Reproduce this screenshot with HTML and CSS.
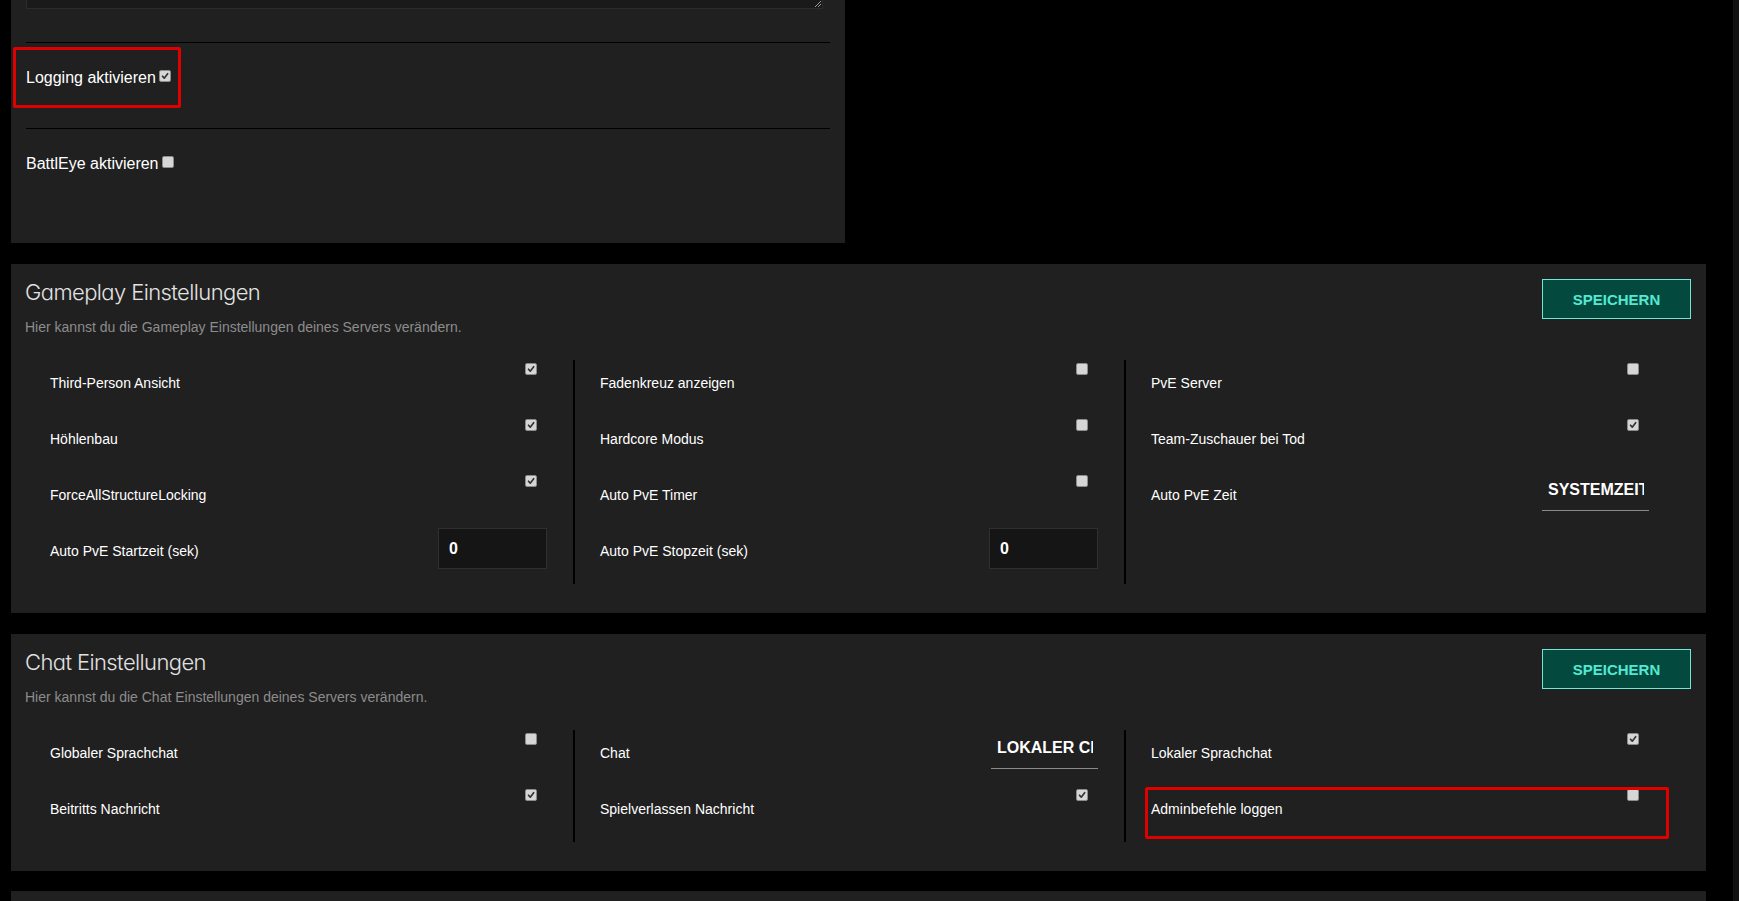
FILE: index.html
```html
<!DOCTYPE html>
<html lang="de">
<head>
<meta charset="utf-8">
<title>Server Einstellungen</title>
<link rel="stylesheet" href="styles.css">
</head>
<body>
<div class="page">
  <section class="panel panel-top">
    <div class="ta">
      <svg class="ta-grip" viewBox="0 0 7 7" width="7" height="7"><path d="M1 7 L7 1 M4 7 L7 4" stroke="#9a9a9a" stroke-width="1"/></svg>
    </div>
    <div class="tp-group">
      <div class="mark mark-log"></div>
      <div class="tp-label">Logging aktivieren<span class="cb on"><svg viewBox="0 0 12 12"><path d="M3 6.3 L5.1 8.6 L9.2 3.3"/></svg></span></div>
    </div>
    <div class="tp-group tp-last">
      <div class="tp-label">BattlEye aktivieren<span class="cb"></span></div>
    </div>
  </section>

  <section class="panel panel-sec">
    <div class="sec-head">
      <div>
        <h2 class="sec-title">Gameplay Einstellungen</h2>
        <p class="sec-sub">Hier kannst du die Gameplay Einstellungen deines Servers verändern.</p>
      </div>
      <button class="btn">SPEICHERN</button>
    </div>
    <div class="grid">
      <div class="col">
        <div class="row"><span class="lbl">Third-Person Ansicht</span><span class="cb on"><svg viewBox="0 0 12 12"><path d="M3 6.3 L5.1 8.6 L9.2 3.3"/></svg></span></div>
        <div class="row"><span class="lbl">Höhlenbau</span><span class="cb on"><svg viewBox="0 0 12 12"><path d="M3 6.3 L5.1 8.6 L9.2 3.3"/></svg></span></div>
        <div class="row"><span class="lbl">ForceAllStructureLocking</span><span class="cb on"><svg viewBox="0 0 12 12"><path d="M3 6.3 L5.1 8.6 L9.2 3.3"/></svg></span></div>
        <div class="row"><span class="lbl">Auto PvE Startzeit (sek)</span><input class="num" type="text" value="0"></div>
      </div>
      <div class="col col-div">
        <div class="row"><span class="lbl">Fadenkreuz anzeigen</span><span class="cb"></span></div>
        <div class="row"><span class="lbl">Hardcore Modus</span><span class="cb"></span></div>
        <div class="row"><span class="lbl">Auto PvE Timer</span><span class="cb"></span></div>
        <div class="row"><span class="lbl">Auto PvE Stopzeit (sek)</span><input class="num" type="text" value="0"></div>
      </div>
      <div class="col col-div">
        <div class="row"><span class="lbl">PvE Server</span><span class="cb"></span></div>
        <div class="row"><span class="lbl">Team-Zuschauer bei Tod</span><span class="cb on"><svg viewBox="0 0 12 12"><path d="M3 6.3 L5.1 8.6 L9.2 3.3"/></svg></span></div>
        <div class="row"><span class="lbl">Auto PvE Zeit</span><div class="sel"><span class="sel-val">SYSTEMZEIT</span></div></div>
        <div class="row"></div>
      </div>
    </div>
  </section>

  <section class="panel panel-sec">
    <div class="sec-head">
      <div>
        <h2 class="sec-title">Chat Einstellungen</h2>
        <p class="sec-sub">Hier kannst du die Chat Einstellungen deines Servers verändern.</p>
      </div>
      <button class="btn">SPEICHERN</button>
    </div>
    <div class="grid grid-chat">
      <div class="col">
        <div class="row"><span class="lbl">Globaler Sprachchat</span><span class="cb"></span></div>
        <div class="row"><span class="lbl">Beitritts Nachricht</span><span class="cb on"><svg viewBox="0 0 12 12"><path d="M3 6.3 L5.1 8.6 L9.2 3.3"/></svg></span></div>
      </div>
      <div class="col col-div">
        <div class="row"><span class="lbl">Chat</span><div class="sel"><span class="sel-val">LOKALER CHAT</span></div></div>
        <div class="row"><span class="lbl">Spielverlassen Nachricht</span><span class="cb on"><svg viewBox="0 0 12 12"><path d="M3 6.3 L5.1 8.6 L9.2 3.3"/></svg></span></div>
      </div>
      <div class="col col-div">
        <div class="row"><span class="lbl">Lokaler Sprachchat</span><span class="cb on"><svg viewBox="0 0 12 12"><path d="M3 6.3 L5.1 8.6 L9.2 3.3"/></svg></span></div>
        <div class="row row-marked"><span class="lbl">Adminbefehle loggen</span><span class="cb"></span></div>
      </div>
    </div>
  </section>

  <section class="panel panel-next"></section>
</div>
<div class="scroll-strip"></div>
</body>
</html>
```

FILE: styles.css
```css
* { box-sizing: border-box; }

html, body {
  margin: 0;
  padding: 0;
  background: #000;
}

body {
  font-family: "Liberation Sans", Arial, sans-serif;
  color: #fff;
  height: 901px;
  overflow: hidden;
}

.page {
  padding-left: 11px;
  width: 1706px;
}

.panel {
  background: #202020;
}

/* top panel */
.panel-top {
  width: 834px;
  height: 243px;
  padding: 0 15px;
}

.ta {
  position: relative;
  width: 797px;
  height: 9px;
  background: #1a1a1a;
  border: 1px solid #2c2c2c;
  border-top: none;
}

.ta-grip {
  position: absolute;
  right: 1px;
  bottom: 1px;
}

.tp-group {
  position: relative;
  margin-top: 33px;
  height: 86px;
  padding-top: 24px;
  border-top: 1px solid #000;
}

.tp-group.tp-last {
  margin-top: 0;
  height: 115px;
  padding-top: 24px;
}

.tp-label {
  display: flex;
  align-items: flex-start;
  font-size: 16px;
  line-height: 22px;
  color: #fff;
}

.tp-label .cb {
  margin: 3px 0 0 3px;
}

.mark {
  position: absolute;
  border: 3px solid #e00000;
  border-radius: 2px;
  pointer-events: none;
}

.mark-log {
  left: -13px;
  top: 4px;
  width: 168px;
  height: 61px;
}

/* checkboxes */
.cb {
  display: block;
  flex: none;
  width: 12px;
  height: 12px;
  margin: 3px 10px 0 0;
  background: #d6d6d6;
  border: 1px solid #8c8c8c;
  border-radius: 2px;
}

.cb svg {
  display: block;
  width: 10px;
  height: 10px;
}

.cb svg path {
  fill: none;
  stroke: #333;
  stroke-width: 2;
  stroke-linecap: round;
  stroke-linejoin: round;
}

/* section panels */
.panel-sec {
  width: 1695px;
  margin-top: 21px;
  padding: 13px 15px 29px 14px;
}

.sec-head {
  display: flex;
  justify-content: space-between;
  align-items: flex-start;
  height: 83px;
}

.sec-title {
  margin: 0;
  font-family: Inter, "Liberation Sans", sans-serif;
  font-weight: 300;
  font-size: 22px;
  line-height: 30px;
  letter-spacing: -0.6px;
  color: #e2e2e2;
  font-feature-settings: "cv11" 1;
}

.sec-sub {
  margin: 10px 0 0;
  font-size: 14px;
  line-height: 20px;
  color: #8c8c8c;
}

.btn {
  margin-top: 2px;
  width: 149px;
  height: 40px;
  padding: 0;
  background: #04493d;
  border: 1px solid #6ee8d2;
  color: #52e9d4;
  font-family: "Liberation Sans", Arial, sans-serif;
  font-weight: bold;
  font-size: 15px;
  text-align: center;
}

.grid {
  display: grid;
  grid-template-columns: repeat(3, 551px);
  margin-left: -3px;
}

.col {
  padding: 0 26px 0 25px;
  border-left: 2px solid transparent;
}

.col:first-child {
  padding-left: 26px;
}

.col-div {
  border-left-color: #000;
}

.row {
  position: relative;
  display: flex;
  justify-content: space-between;
  align-items: flex-start;
  height: 56px;
}

.lbl {
  margin-top: 13px;
  font-size: 14px;
  line-height: 20px;
  color: #fff;
}

.num {
  width: 109px;
  height: 41px;
  margin: 0;
  padding: 0 10px;
  background: #151515;
  border: 1px solid #2f2f2f;
  border-radius: 0;
  color: #fff;
  font-family: "Liberation Sans", Arial, sans-serif;
  font-weight: bold;
  font-size: 16px;
  outline: none;
}

.sel {
  width: 107px;
  height: 39px;
  padding: 8px 5px 10px 6px;
  border-bottom: 1px solid #8a8a8a;
  font-weight: bold;
  font-size: 16px;
  line-height: 20px;
  color: #fff;
}

.sel-val {
  display: block;
  width: 96px;
  white-space: nowrap;
  overflow: hidden;
}

.row-marked::after {
  content: "";
  position: absolute;
  left: -6px;
  right: -20px;
  top: 1px;
  height: 46px;
  border: 3px solid #e00000;
  border-radius: 2px;
}

.panel-next {
  width: 1695px;
  height: 40px;
  margin-top: 20px;
}

.scroll-strip {
  position: fixed;
  top: 0;
  right: 0;
  width: 6px;
  height: 100%;
  background: #111;
}
```
